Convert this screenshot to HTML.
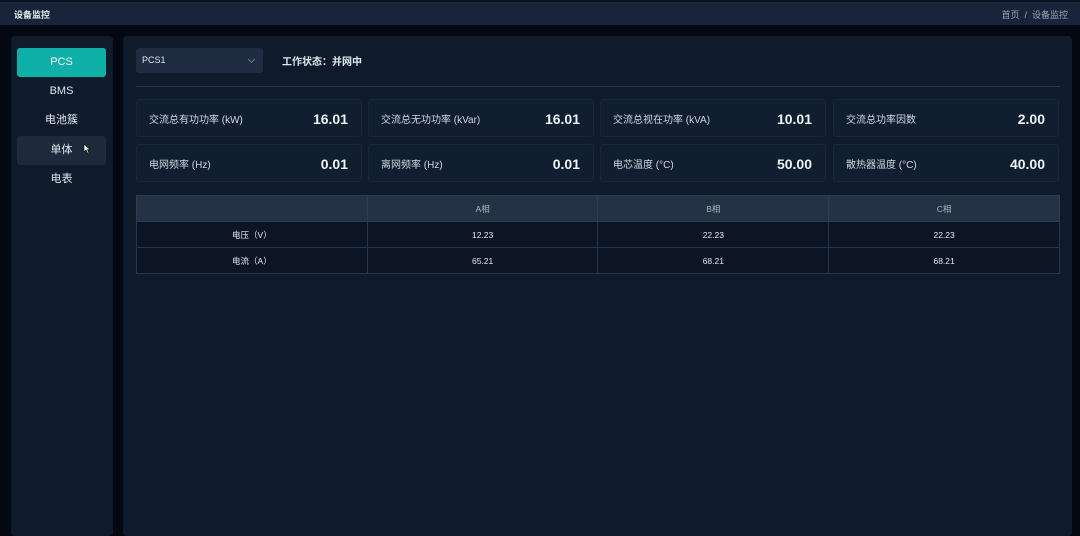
<!DOCTYPE html>
<html><head><meta charset="utf-8"><style>
*{margin:0;padding:0;box-sizing:border-box}
body{width:1080px;height:530px;overflow:hidden;background:#040812;font-family:"Liberation Sans","Noto Sans CJK SC",sans-serif;color:#dfe6ee;position:relative}
.top{position:absolute;left:0;top:0;width:1080px;height:25px;background:#18243a;border-top:2px solid #0c1220}
.top .t{position:absolute;left:14px;top:6px;font-size:9px;font-weight:bold;color:#e8edf3}
.top .b{position:absolute;right:12px;top:6px;font-size:9px;color:#9aa6b4}
.side{position:absolute;left:11px;top:36px;width:102px;height:500px;background:#0f1a2b;border-radius:4px}
.btn{position:absolute;left:6px;width:89px;height:29px;border-radius:3px;font-size:11px;text-align:center;line-height:29px;color:#dfe6ee}
.main{position:absolute;left:123px;top:36px;width:949px;height:500px;background:#0f1a2b;border-radius:4px}
.sel{position:absolute;left:13px;top:12px;width:127px;height:25px;background:#1e2b40;border-radius:3px;font-size:9px;line-height:25px;padding-left:6px}
.sel:after{content:"";position:absolute;right:9px;top:9px;width:4px;height:4px;border-right:1px solid #6a7688;border-bottom:1px solid #6a7688;transform:rotate(45deg)}
.st{position:absolute;left:159px;top:17px;font-size:10px;font-weight:bold}
.hr{position:absolute;left:13px;top:50px;width:924px;height:1px;background:#2a3548}
.card{position:absolute;width:226px;height:38px;background:#111e2f;border:1px solid #18263a;border-radius:3px}
.card .l{position:absolute;left:12px;top:11px;font-size:10px;color:#cfd7e0}
.card .v{position:absolute;right:13px;top:11px;font-size:14px;font-weight:bold;color:#eef2f6}
table{position:absolute;left:13px;top:159px;width:924px;border-collapse:collapse;font-size:8.5px;color:#dfe6ee}
td{border:1px solid #26344a;text-align:center;height:26px;width:231px}
tr.h td{background:#253246;color:#aab4c0;border-color:#2e3c52}
tr.r td{background:#0b1524}
</style></head><body>
<div class="top"><div class="t">设备监控</div><div class="b">首页 &nbsp;/&nbsp; 设备监控</div></div>
<div class="side">
<div class="btn" style="top:12px;background:#0fb0a8;color:#fff">PCS</div>
<div class="btn" style="top:41px">BMS</div>
<div class="btn" style="top:70px">电池簇</div>
<div class="btn" style="top:100px;background:#1e2a3b">单体<svg style="position:absolute;left:66px;top:7px" width="8" height="12" viewBox="0 0 8 12"><path d="M1 1 L1 9 L3 7 L5 11 L6 10.5 L4.5 6.5 L7 6.5 Z" fill="#fff" stroke="#000" stroke-width="0.6"/></svg></div>
<div class="btn" style="top:129px">电表</div>
</div>
<div class="main">
<div class="sel">PCS1</div>
<div class="st">工作状态：并网中</div>
<div class="hr"></div>
<div class="card" style="left:13px;top:63px"><div class="l">交流总有功功率 (kW)</div><div class="v">16.01</div></div>
<div class="card" style="left:245px;top:63px"><div class="l">交流总无功功率 (kVar)</div><div class="v">16.01</div></div>
<div class="card" style="left:477px;top:63px"><div class="l">交流总视在功率 (kVA)</div><div class="v">10.01</div></div>
<div class="card" style="left:710px;top:63px"><div class="l">交流总功率因数</div><div class="v">2.00</div></div>
<div class="card" style="left:13px;top:108px"><div class="l">电网频率 (Hz)</div><div class="v">0.01</div></div>
<div class="card" style="left:245px;top:108px"><div class="l">离网频率 (Hz)</div><div class="v">0.01</div></div>
<div class="card" style="left:477px;top:108px"><div class="l">电芯温度 (°C)</div><div class="v">50.00</div></div>
<div class="card" style="left:710px;top:108px"><div class="l">散热器温度 (°C)</div><div class="v">40.00</div></div>
<table>
<tr class="h"><td></td><td>A相</td><td>B相</td><td>C相</td></tr>
<tr class="r"><td>电压（V）</td><td>12.23</td><td>22.23</td><td>22.23</td></tr>
<tr class="r"><td>电流（A）</td><td>65.21</td><td>68.21</td><td>68.21</td></tr>
</table>
</div>
</body></html>
